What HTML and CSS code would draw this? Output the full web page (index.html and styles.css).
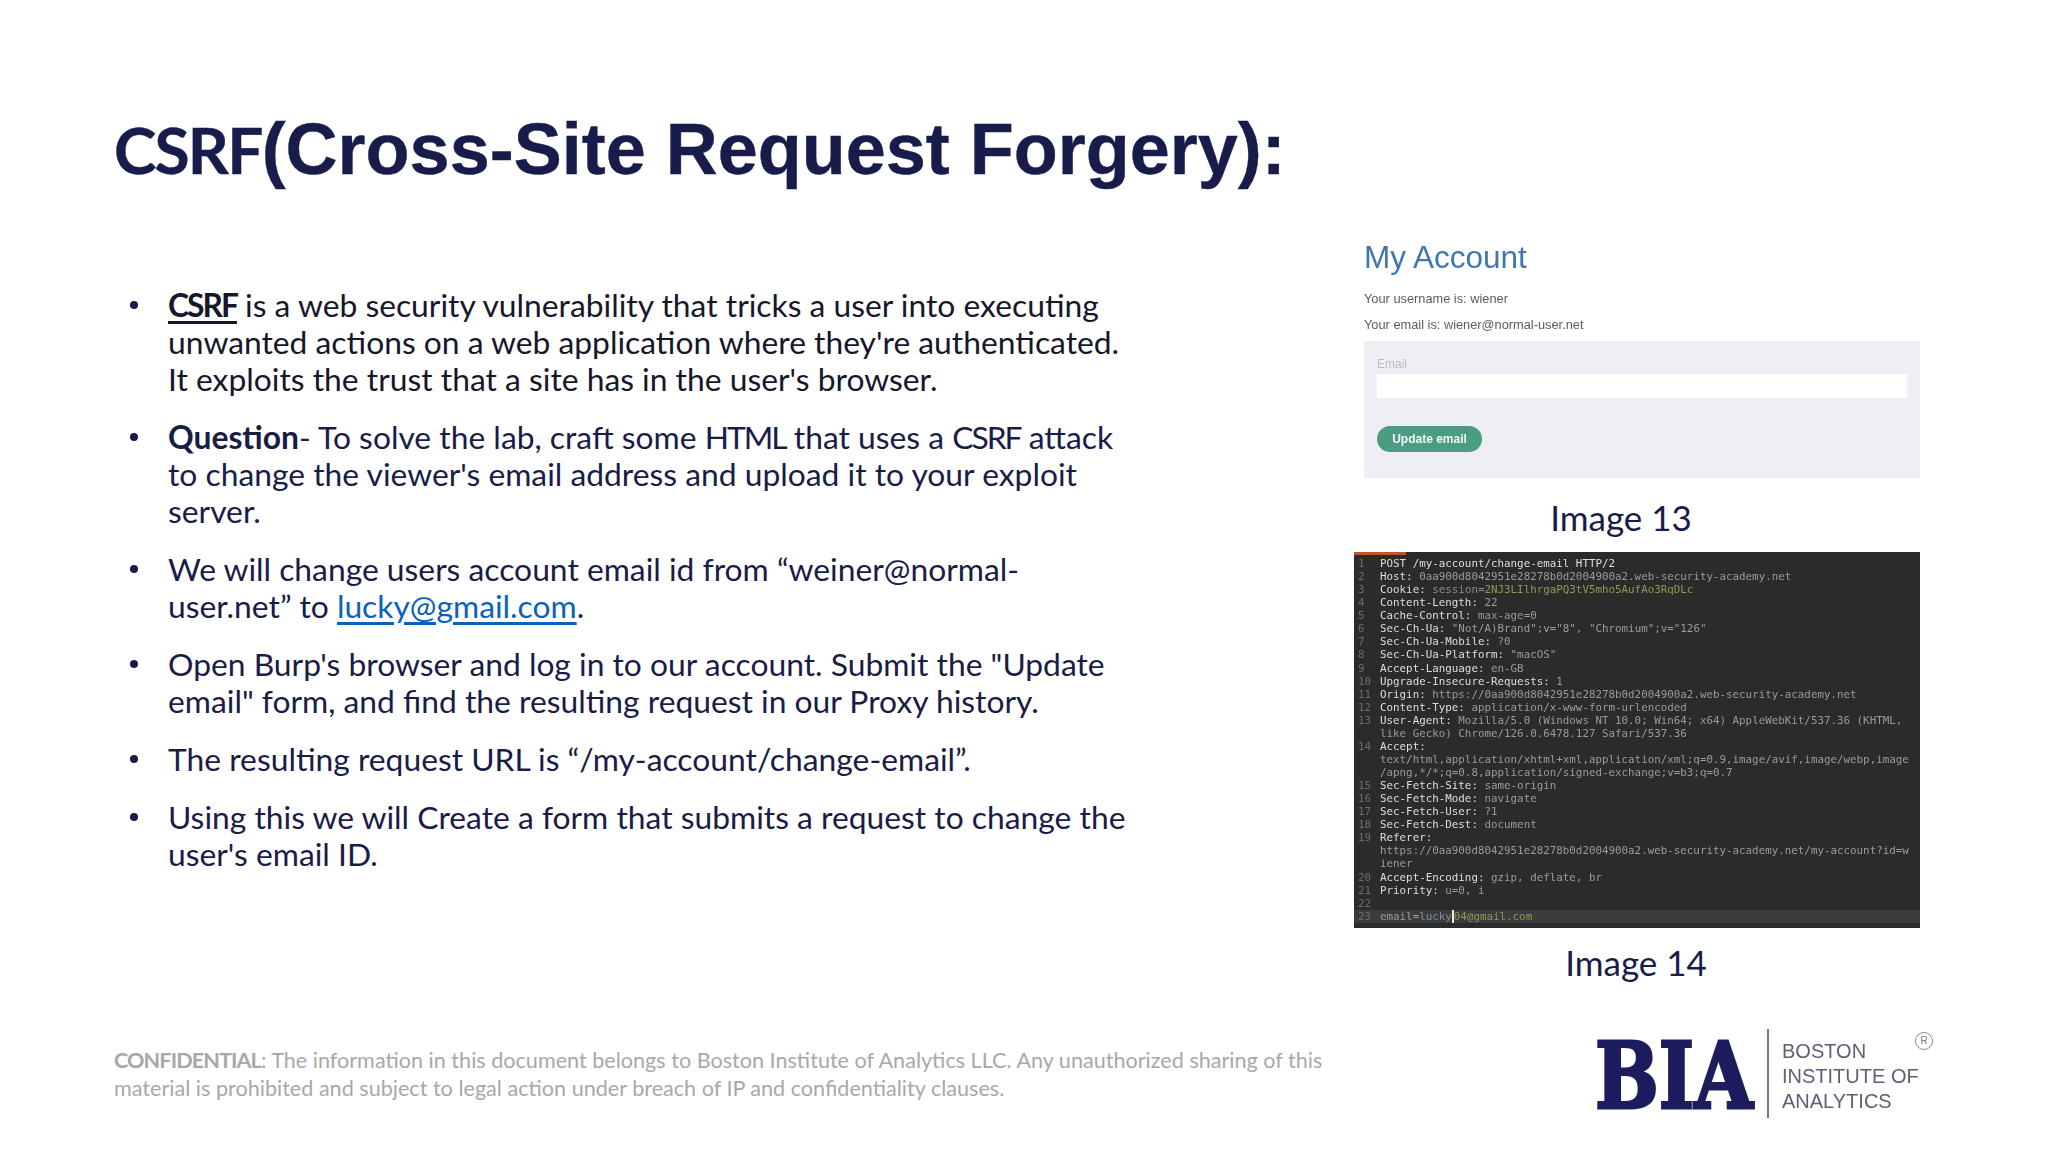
FILE: index.html
```html
<!DOCTYPE html>
<html lang="en">
<head>
<meta charset="utf-8">
<title>CSRF</title>
<link rel="stylesheet" href="styles.css">
</head>
<body>
<div class="slide">
  <h1 class="title"><span class="title-a">CSRF</span>(Cross-Site Request Forgery):</h1>
  <div class="main">
    <ul class="points">
      <li class="dark"><b class="u">CSRF</b> is a web security vulnerability that tricks a user into executing<br>unwanted actions on a web application where they're authenticated.<br>It exploits the trust that a site has in the user's browser.</li>
      <li><b>Question</b>- To solve the lab, craft some <span class="caps">HTML</span> that uses a <span class="caps">CSRF</span> attack<br>to change the viewer's email address and upload it to your exploit<br>server.</li>
      <li>We will change users account email id from “weiner@normal-<br>user.net” to <a class="link" href="#">lucky@gmail.com</a>.</li>
      <li>Open Burp's browser and log in to our account. Submit the "Update<br>email" form, and find the resulting request in our Proxy history.</li>
      <li>The resulting request URL is “/my-account/change-email”.</li>
      <li>Using this we will Create a form that submits a request to change the<br>user's email ID.</li>
    </ul>
    <div class="side">
      <div class="shot-account">
        <div class="acc-title">My Account</div>
        <div class="acc-line first">Your username is: wiener</div>
        <div class="acc-line">Your email is: wiener@normal-user.net</div>
        <div class="acc-form">
          <div class="acc-label">Email</div>
          <div class="acc-input"></div>
          <div class="acc-btn">Update email</div>
        </div>
      </div>
      <div class="caption cap13">Image 13</div>
      <div class="shot-term">
        <div class="tab-strip"></div>
        <div class="term-body">
          <div class="r"><i>1</i><span>POST /my-account/change-email HTTP/2</span></div>
          <div class="r"><i>2</i><span>Host: <em>0aa900d8042951e28278b0d2004900a2.web-security-academy.net</em></span></div>
          <div class="r"><i>3</i><span>Cookie: <em class="blue">session=</em><em class="green">2NJ3LIlhrgaPQ3tV5mho5AufAo3RqDLc</em></span></div>
          <div class="r"><i>4</i><span>Content-Length: <em>22</em></span></div>
          <div class="r"><i>5</i><span>Cache-Control: <em>max-age=0</em></span></div>
          <div class="r"><i>6</i><span>Sec-Ch-Ua: <em>"Not/A)Brand";v="8", "Chromium";v="126"</em></span></div>
          <div class="r"><i>7</i><span>Sec-Ch-Ua-Mobile: <em>?0</em></span></div>
          <div class="r"><i>8</i><span>Sec-Ch-Ua-Platform: <em>"macOS"</em></span></div>
          <div class="r"><i>9</i><span>Accept-Language: <em>en-GB</em></span></div>
          <div class="r"><i>10</i><span>Upgrade-Insecure-Requests: <em>1</em></span></div>
          <div class="r"><i>11</i><span>Origin: <em>https://0aa900d8042951e28278b0d2004900a2.web-security-academy.net</em></span></div>
          <div class="r"><i>12</i><span>Content-Type: <em>application/x-www-form-urlencoded</em></span></div>
          <div class="r"><i>13</i><span>User-Agent: <em>Mozilla/5.0 (Windows NT 10.0; Win64; x64) AppleWebKit/537.36 (KHTML,</em></span></div>
          <div class="r"><i></i><span><em>like Gecko) Chrome/126.0.6478.127 Safari/537.36</em></span></div>
          <div class="r"><i>14</i><span>Accept:</span></div>
          <div class="r"><i></i><span><em>text/html,application/xhtml+xml,application/xml;q=0.9,image/avif,image/webp,image</em></span></div>
          <div class="r"><i></i><span><em>/apng,*/*;q=0.8,application/signed-exchange;v=b3;q=0.7</em></span></div>
          <div class="r"><i>15</i><span>Sec-Fetch-Site: <em>same-origin</em></span></div>
          <div class="r"><i>16</i><span>Sec-Fetch-Mode: <em>navigate</em></span></div>
          <div class="r"><i>17</i><span>Sec-Fetch-User: <em>?1</em></span></div>
          <div class="r"><i>18</i><span>Sec-Fetch-Dest: <em>document</em></span></div>
          <div class="r"><i>19</i><span>Referer:</span></div>
          <div class="r"><i></i><span><em>https://0aa900d8042951e28278b0d2004900a2.web-security-academy.net/my-account?id=w</em></span></div>
          <div class="r"><i></i><span><em>iener</em></span></div>
          <div class="r"><i>20</i><span>Accept-Encoding: <em>gzip, deflate, br</em></span></div>
          <div class="r"><i>21</i><span>Priority: <em>u=0, i</em></span></div>
          <div class="r"><i>22</i><span></span></div>
          <div class="r last"><i>23</i><span><em>email=</em><em class="blue">lucky</em><b class="caret"></b><em class="green">04@gmail.com</em></span></div>
        </div>
      </div>
      <div class="caption cap14">Image 14</div>
    </div>
  </div>
  <div class="footer">
    <p class="conf"><b class="conf-b">CONFIDENTIAL</b>: The information in this document belongs to Boston Institute of Analytics LLC. Any unauthorized sharing of this<br>material is prohibited and subject to legal action under breach of IP and confidentiality clauses.</p>
    <div class="logo">
      <span class="logo-mark">BIA</span>
      <span class="logo-div"></span>
      <span class="logo-name">BOSTON<br>INSTITUTE OF<br>ANALYTICS</span>
      <span class="logo-r">R</span>
    </div>
  </div>
</div>
</body>
</html>
```
FILE: styles.css
```css
* { box-sizing: border-box; }
html, body { margin: 0; padding: 0; background: #fff; }
.slide {
  width: 2048px; height: 1152px; overflow: hidden;
  display: flex; flex-direction: column;
  padding: 109px 128px 34px 114px;
  font-family: Lato, "Noto Sans", sans-serif;
  color: #1a1c48;
}
.title {
  margin: 0; height: 80px;
  font: bold 72px/80px "Liberation Sans", sans-serif;
  color: #171c4a; white-space: nowrap;
  -webkit-text-stroke: .4px #171c4a;
}
.title-a { font-family: Lato, sans-serif; font-size: 64px; letter-spacing: -1.8px; }
.main { display: flex; justify-content: space-between; margin-top: 41px; }
.points {
  list-style: none; margin: 0; padding: 57px 0 0 54px;
  font-size: 31.8px; line-height: 37px; white-space: nowrap;
}
.points li { position: relative; margin-bottom: 21px; }
.points li::before {
  content: ""; position: absolute; left: -38px; top: 14px;
  width: 8px; height: 8px; border-radius: 50%; background: #1a1c48;
}
.points .dark { color: #16172a; }
.u { text-decoration: underline; text-underline-offset: 4px; letter-spacing: -2px; }
.caps { letter-spacing: -2px; }
.link { color: #0b62bd; text-decoration: underline; text-underline-offset: 4px; }
.side { width: 566px; display: flex; flex-direction: column; }
.shot-account { margin-left: 10px; font-family: "Liberation Sans", sans-serif; height: 248px; display: flex; flex-direction: column; filter: blur(.6px); }
.acc-title { font-size: 31.5px; line-height: 34px; color: #3f78b0; margin-top: 10px; }
.acc-line { font-size: 12.8px; line-height: 15px; color: #5c5c5c; margin-top: 11px; }
.acc-line.first { margin-top: 17px; }
.acc-form { margin-top: 9px; flex: 1; background: #edeff2; padding: 15px 13px 0 13px; }
.acc-label { font-size: 12px; line-height: 16px; color: #bcbcbc; }
.acc-input { height: 24px; background: #fff; margin-top: 2px; }
.acc-btn {
  margin-top: 28px; width: 105px; height: 26px; border-radius: 13px;
  background: #4a9d83; color: #f2f8f5; font-size: 12px; font-weight: bold;
  line-height: 26px; text-align: center;
}
.caption { font-size: 35px; line-height: 37px; text-align: center; }
.cap13 { height: 37px; margin: 21px 0 16px; padding-right: 32px; }
.cap14 { height: 37px; margin-top: 16px; padding-right: 2px; }
.shot-term {
  height: 376px; background: #2b2b2b; position: relative; overflow: hidden;
  font-family: "DejaVu Sans Mono", monospace; font-size: 10.85px; line-height: 13.07px;
  color: #dedfdf;
}
.tab-strip { position: absolute; left: 0; top: 0; width: 52px; height: 3px; background: #b5582a; }
.term-body { padding-top: 5px; filter: blur(.7px); }
.r { display: flex; height: 13.07px; white-space: nowrap; }
.r i { width: 26px; flex: none; font-style: normal; color: #6c6d6d; padding-left: 4px; }
.r em { font-style: normal; color: #9a9b9b; }
.r em.blue { color: #7f8ea3; }
.r em.green { color: #8f9a55; }
.r.last { background: #3a3b3b; }
.caret { display: inline-block; width: 2px; height: 13px; background: #eee; vertical-align: top; }
.footer { margin-top: auto; display: flex; justify-content: space-between; align-items: center; margin-right: -15px; }
.conf { margin: 0; font-size: 21.6px; line-height: 28px; color: #a8a8a8; white-space: nowrap; }
.conf-b { letter-spacing: -.9px; }
.logo { position: relative; display: flex; align-items: center; height: 89px; width: 340px; filter: blur(.4px); }
.logo-mark {
  width: 159px; flex: none; white-space: nowrap; padding-top: 5px;
  font: bold 91px/89px "DejaVu Serif", serif; color: #1c1c5e;
  transform: scaleX(.83); transform-origin: left center; -webkit-text-stroke: 3px #1c1c5e;
}
.logo-div { width: 2px; height: 89px; background: #77777f; margin: 0 13px; flex: none; }
.logo-name { font: 20px/25px "Liberation Sans", sans-serif; color: #5f5f75; white-space: nowrap; padding-top: 5px; }
.logo-r {
  position: absolute; right: 2px; top: 3px; width: 18px; height: 18px; border: 1.5px solid #888;
  border-radius: 50%; font: 10px/15px "Liberation Sans", sans-serif; text-align: center; color: #777;
}
```
